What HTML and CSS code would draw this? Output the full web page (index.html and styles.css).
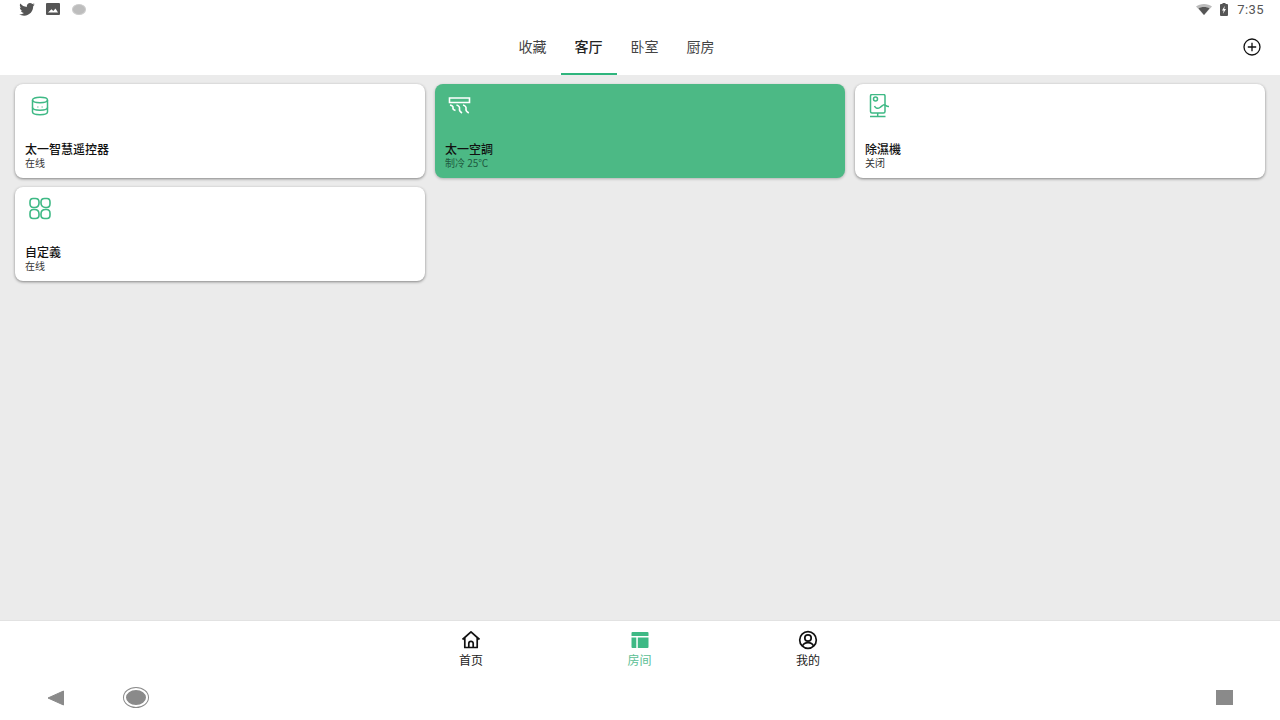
FILE: index.html
```html
<!DOCTYPE html>
<html lang="zh-CN">
<head>
  <meta charset="UTF-8">
  <meta name="viewport" content="width=device-width, initial-scale=1.0">
  <title>客厅</title>
  <link rel="stylesheet" href="styles.css">
</head>
<body>
  <div class="app">
    <div class="status-bar">
      <div class="status-left">
        <svg class="st-twitter" width="16" height="13" viewBox="0 0 24 20"><path fill="#555" d="M24 2.400c-.9.4-1.800.7-2.800.8 1-.6 1.800-1.600 2.200-2.700-1 .6-2 1-3.100 1.200C19.300.7 18 .1 16.600.1c-2.700 0-4.900 2.200-4.900 4.900 0 .4 0 .8.100 1.100C7.700 5.900 4.100 4 1.700.9c-.4.700-.7 1.600-.7 2.500 0 1.700.9 3.200 2.200 4.100-.8 0-1.600-.2-2.200-.6v.1c0 2.400 1.700 4.400 3.900 4.800-.4.100-.8.200-1.300.2-.3 0-.6 0-.9-.1.600 2 2.400 3.400 4.600 3.400-1.700 1.300-3.800 2.100-6.100 2.100-.4 0-.8 0-1.200-.1 2.200 1.400 4.800 2.200 7.500 2.200 9.100 0 14-7.500 14-14v-.6c1-.7 1.800-1.600 2.500-2.500z"/></svg>
        <svg class="st-image" width="14" height="12" viewBox="0 0 14 12"><path fill="#555" fill-rule="evenodd" d="M1 0h12a1 1 0 0 1 1 1v10a1 1 0 0 1-1 1H1a1 1 0 0 1-1-1V1a1 1 0 0 1 1-1zM2 9.500h10L9.500 5.500 7.300 8 5.500 6.300z"/></svg>
        <span class="st-dot"></span>
      </div>
      <div class="status-right">
        <svg class="st-wifi" width="16" height="11" viewBox="0 0 16 11"><path fill="#bbb" d="M0 2.500C2 .9 4.900 0 8 0s6 .9 8 2.500L8 11z"/><path fill="#555" d="M2.600 4.500C4 3.500 5.900 3 8 3s4 .5 5.400 1.500L8 11z"/></svg>
        <svg width="8" height="13" viewBox="0 0 8 13"><path fill="#555" d="M2.500 0h3v1H7a1 1 0 0 1 1 1v10a1 1 0 0 1-1 1H1a1 1 0 0 1-1-1V2a1 1 0 0 1 1-1h1.500z"/><path fill="#fff" d="M4.800 2.800 2 7.400h1.700L3 10.800l3-4.800H4.200z"/></svg>
        <span class="clock">7:35</span>
      </div>
    </div>

    <div class="top-bar">
      <div class="tabs">
        <div class="tab">收藏</div>
        <div class="tab active">客厅</div>
        <div class="tab">卧室</div>
        <div class="tab">厨房</div>
      </div>
      <div class="add-btn">
        <svg width="18" height="18" viewBox="0 0 18 18" fill="none" stroke="#111" stroke-width="1.300"><circle cx="9" cy="9" r="8"/><path d="M9 4.800v8.400M4.800 9h8.400"/></svg>
      </div>
    </div>

    <div class="content">
      <div class="card">
        <svg class="card-icon" width="24" height="24" viewBox="0 0 24 24" fill="none" stroke="#3eb985" stroke-width="1.500">
          <path d="M4.500 6c0-1.700 3.400-2.700 7.500-2.700s7.500 1 7.500 2.700v12c0 1.700-3.400 2.700-7.500 2.700S4.500 19.700 4.500 18z"/>
          <path d="M4.500 6c0 1.700 3.400 2.700 7.500 2.700s7.500-1 7.500-2.700M4.500 13.500c0 1.700 3.400 2.700 7.500 2.700s7.500-1 7.500-2.700"/>
          <path d="M9.500 13h.8M13.700 13h.8"/>
        </svg>
        <div class="card-name">太一智慧遥控器</div>
        <div class="card-state">在线</div>
      </div>
      <div class="card on">
        <svg class="card-icon" width="24" height="24" viewBox="0 0 24 24" fill="none" stroke="#fff" stroke-width="1.600">
          <path d="M1.500 4h20v4.500h-20z"/>
          <path d="M2 11c2 .5 3.500 1.500 3 3 -.4 1.300 1 2 2.500 2.500"/>
          <path d="M8.500 11c2 .5 3.500 2 3 4 -.4 1.500 1 3 2.500 4"/>
          <path d="M15 11c2 .5 3.500 2 3 4 -.4 1.500 1 3 2.800 4"/>
        </svg>
        <div class="card-name">太一空調</div>
        <div class="card-state">制冷 25℃</div>
      </div>
      <div class="card">
        <svg class="card-icon" width="24" height="24" viewBox="0 0 24 24" fill="none" stroke="#3eb985" stroke-width="1.500">
          <rect x="2.500" y="0.500" width="14.500" height="18.500" rx="1.500"/>
          <circle cx="7.500" cy="5" r="2"/>
          <path d="M6.500 12c1 2.500 3.500 3 5.500 1.500 2-1.500 3-2.800 4-2.800 1.500 0 2 2 5 1.800"/>
          <path d="M9.700 19v3M2 22.500h15.500"/>
        </svg>
        <div class="card-name">除濕機</div>
        <div class="card-state">关闭</div>
      </div>
      <div class="card">
        <svg class="card-icon" width="24" height="24" viewBox="0 0 24 24" fill="none" stroke="#3eb985" stroke-width="1.600">
          <path d="M5 1.500h2.500c2 0 3.500 1.300 3.500 3.500v1c0 2.800-1.800 4.500-4.500 4.500H5.500C3.200 10.500 2 9 2 6.800V5c0-2.200 1-3.500 3-3.500z"/>
          <path d="M16.500 1.500H19c2 0 3 1.300 3 3.500v1.800c0 2.200-1.200 3.700-3.500 3.700h-1c-2.700 0-4.500-1.700-4.500-4.500V5c0-2.200 1.500-3.500 3.500-3.500z"/>
          <path d="M5.500 12.500h1c2.700 0 4.500 1.700 4.500 4.500v1c0 2.200-1.500 3.500-3.500 3.500H5c-2 0-3-1.300-3-3.500v-1.800c0-2.200 1.200-3.700 3.500-3.700z"/>
          <path d="M17.500 12.500h1c2.300 0 3.500 1.500 3.500 3.700V18c0 2.200-1 3.500-3 3.500h-2.500c-2 0-3.500-1.300-3.500-3.500v-1c0-2.800 1.800-4.500 4.500-4.500z"/>
        </svg>
        <div class="card-name">自定義</div>
        <div class="card-state">在线</div>
      </div>
    </div>

    <div class="bottom-nav">
      <div class="nav-item">
        <svg width="20" height="20" viewBox="0 0 20 20" fill="none" stroke="#111" stroke-width="1.700" stroke-linejoin="round"><path d="M1.500 9.500 10 1.800l8.500 7.700M3.800 8v9.500h12.400V8"/><path d="M7.800 17.500v-4a2.200 2.200 0 0 1 4.400 0v4"/></svg>
        <span>首页</span>
      </div>
      <div class="nav-item active">
        <svg width="20" height="20" viewBox="0 0 20 20"><path fill="#3eb985" d="M2.500 2h15a1 1 0 0 1 1 1v3h-17V3a1 1 0 0 1 1-1zM1.500 7.500h4.800v10.500H2.500a1 1 0 0 1-1-1zM7.800 7.500h10.700V17a1 1 0 0 1-1 1H7.800z"/></svg>
        <span>房间</span>
      </div>
      <div class="nav-item">
        <svg width="20" height="20" viewBox="0 0 20 20" fill="none" stroke="#111" stroke-width="1.700"><circle cx="10" cy="10" r="8.300"/><circle cx="10" cy="8" r="3.200"/><path d="M4.500 16c1-2.500 3-3.300 5.500-3.300s4.500.8 5.500 3.300"/></svg>
        <span>我的</span>
      </div>
    </div>

    <div class="sys-nav">
      <div class="sys-left">
        <svg width="18" height="16" viewBox="0 0 18 16"><path fill="#8a8a8a" stroke="#8a8a8a" stroke-width="1" stroke-linejoin="round" d="M16.500 1v14L1 8z"/></svg>
        <span class="sys-home"></span>
      </div>
      <span class="sys-recent"></span>
    </div>
  </div>
</body>
</html>
```

FILE: styles.css
```css
* {
  box-sizing: border-box;
}

body {
  margin: 0;
  font-family: "Noto Sans CJK SC", "Noto Sans", sans-serif;
  color: #111;
  background-color: #ebebeb;
}

.app {
  width: 1280px;
  height: 720px;
  display: flex;
  flex-direction: column;
  overflow: hidden;
}

/* status bar */
.status-bar {
  height: 20px;
  padding: 0 16px 2px 19px;
  display: flex;
  justify-content: space-between;
  align-items: center;
  background-color: #fff;
}

.status-left {
  display: flex;
  align-items: center;
}

.st-image {
  margin-left: 11px;
}

.st-dot {
  width: 14px;
  height: 11px;
  margin-left: 12px;
  border-radius: 50%;
  background-color: #bdbdbd;
  border: 1px solid #ccc;
}

.status-right {
  display: flex;
  align-items: center;
  gap: 6px;
}

.st-wifi {
  margin-right: 2px;
}

.clock {
  margin-left: 3px;
  font-family: "Roboto", sans-serif;
  font-size: 13px;
  letter-spacing: 0.4px;
  color: #555;
}

/* tabs */
.top-bar {
  height: 55px;
  padding-right: 19px;
  display: flex;
  align-items: stretch;
  background-color: #fff;
}

.tabs {
  flex: 1;
  padding-right: 10px;
  display: flex;
  justify-content: center;
}

.tab {
  width: 56px;
  padding-top: 16px;
  text-align: center;
  font-size: 14px;
  line-height: 20px;
  color: #444;
  border-bottom: 2px solid transparent;
}

.tab.active {
  color: #222;
  font-weight: 500;
  border-bottom-color: #2fb57d;
}

.add-btn {
  width: 18px;
  padding-top: 17px;
}

/* device cards */
.content {
  flex: 1;
  padding: 9px 15px;
  display: grid;
  grid-template-columns: repeat(3, 410px);
  grid-auto-rows: 94px;
  column-gap: 10px;
  row-gap: 9px;
  align-content: start;
  background-color: #ebebeb;
}

.card {
  padding: 10px;
  display: flex;
  flex-direction: column;
  background-color: #fff;
  border-radius: 8px;
  box-shadow: 0 1px 3px rgba(0, 0, 0, 0.45);
}

.card.on {
  background-color: #4cb985;
  box-shadow: 0 1px 3px rgba(0, 0, 0, 0.25);
}

.card-icon {
  display: block;
  margin-left: 3px;
  flex-shrink: 0;
}

.card-name {
  margin-top: 23px;
  font-size: 12px;
  line-height: 16px;
  font-weight: 500;
  color: #111;
}

.card-state {
  font-size: 10px;
  line-height: 11px;
  color: #333;
}

.card.on .card-state {
  color: #1f5a40;
}

/* bottom navigation */
.bottom-nav {
  height: 60px;
  padding-right: 1px;
  display: flex;
  justify-content: center;
  background-color: #fff;
  border-top: 1px solid #e2e2e2;
}

.nav-item {
  width: 168.500px;
  padding-top: 9px;
  display: flex;
  flex-direction: column;
  align-items: center;
  font-size: 12px;
  line-height: 16px;
  color: #222;
}

.nav-item span {
  margin-top: 2px;
}

.nav-item.active {
  color: #5cc095;
}

/* android nav buttons */
.sys-nav {
  height: 40px;
  padding: 0 47px 5px 47px;
  display: flex;
  justify-content: space-between;
  align-items: center;
  background-color: #fff;
}

.sys-left {
  display: flex;
  align-items: center;
  gap: 59px;
}

.sys-home {
  width: 24px;
  height: 19px;
  border-radius: 50%;
  background-color: #8a8a8a;
  border: 2px solid #fff;
  box-shadow: 0 0 0 1px #8a8a8a;
}

.sys-recent {
  width: 17px;
  height: 15px;
  background-color: #8a8a8a;
}
```
